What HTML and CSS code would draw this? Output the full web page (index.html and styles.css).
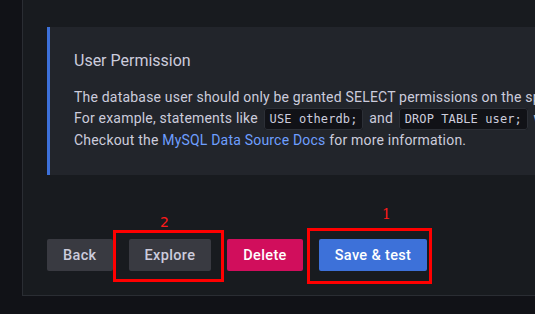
FILE: index.html
```html
<!DOCTYPE html>
<html>
<head>
    <meta charset="UTF-8" />
    <title>Data source settings</title>
    <link rel="stylesheet" href="styles.css">
</head>
<body>
<div class="page">
    <div class="panel">
        <div class="info">
            <div class="info_title">User Permission</div>
            <p class="info_body">
                The database user should only be granted SELECT permissions on the specified database &amp; tables you want to query.<br>
                For example, statements like <code>USE otherdb;</code> and <code>DROP TABLE user;</code> would be executed.<br>
                Checkout the <a href="#">MySQL Data Source Docs</a> for more information.
            </p>
        </div>
        <div class="actions">
            <button class="btn secondary">Back</button>
            <button class="btn secondary">Explore</button>
            <button class="btn destructive">Delete</button>
            <button class="btn primary">Save &amp; test</button>

            <div class="mark mark_explore"></div>
            <span class="mark_num num_explore">2</span>
            <div class="mark mark_save"></div>
            <span class="mark_num num_save">1</span>
        </div>
    </div>
</div>
</body>
</html>
```

FILE: styles.css
```css
html, body {
    margin: 0;
    background-color: #111217;
    overflow: hidden;
}

body {
    width: 535px;
    height: 314px;
    font-family: Roboto, "Liberation Sans", sans-serif;
    color: #ccccdc;
}

.page {
    padding-left: 22px;
}

.panel {
    width: 900px;
    background-color: #181b1f;
    border-left: 1px solid #2a2d33;
    border-bottom: 1px solid #2a2d33;
    padding: 27px 0 24px 24px;
}

.info {
    background-color: #22252b;
    border-left: 3px solid #3d71d9;
    padding: 22px 0 24px 24px;
    width: 820px;
}

.info_title {
    font-size: 16px;
    line-height: 24px;
    color: #ccccdc;
    margin-bottom: 14px;
}

.info_body {
    margin: 0;
    font-size: 14px;
    line-height: 21px;
    letter-spacing: 0.2px;
    white-space: nowrap;
    color: #ccccdc;
}

.info_body code {
    font-family: "DejaVu Sans Mono", "Liberation Mono", monospace;
    font-size: 12px;
    letter-spacing: 0.1px;
    background-color: #111217;
    border: 1px solid #2c2f36;
    border-radius: 3px;
    padding: 3px 5px;
    margin: 0 2px;
    color: #ccccdc;
}

.info_body a {
    color: #6e9fff;
    text-decoration: none;
}

.actions {
    position: relative;
    display: flex;
    gap: 16px;
    margin-top: 64px;
}

.btn {
    height: 32px;
    padding: 0 16px;
    border: none;
    border-radius: 2px;
    font-family: Roboto, "Liberation Sans", sans-serif;
    font-size: 14.5px;
    font-weight: 500;
    letter-spacing: 0.35px;
}

.secondary {
    background-color: #393a41;
    color: #ccccdc;
}

.destructive {
    background-color: #d10e5c;
    color: #ffffff;
}

.primary {
    background-color: #3d71d9;
    color: #ffffff;
}

/* red annotation boxes drawn over the buttons */
.mark {
    position: absolute;
    border: 3px solid #ff0000;
    box-sizing: border-box;
}

.mark_explore {
    left: 66px;
    top: -9px;
    width: 111px;
    height: 52px;
}

.mark_save {
    left: 260px;
    top: -11px;
    width: 125px;
    height: 56px;
}

.mark_num {
    position: absolute;
    font-family: "DejaVu Sans", sans-serif;
    font-size: 14px;
    line-height: 14px;
    color: #ff1a1a;
}

.num_explore {
    left: 113px;
    top: -24px;
}

.num_save {
    left: 335px;
    top: -32px;
    font-family: "DejaVu Serif", serif;
}
```
